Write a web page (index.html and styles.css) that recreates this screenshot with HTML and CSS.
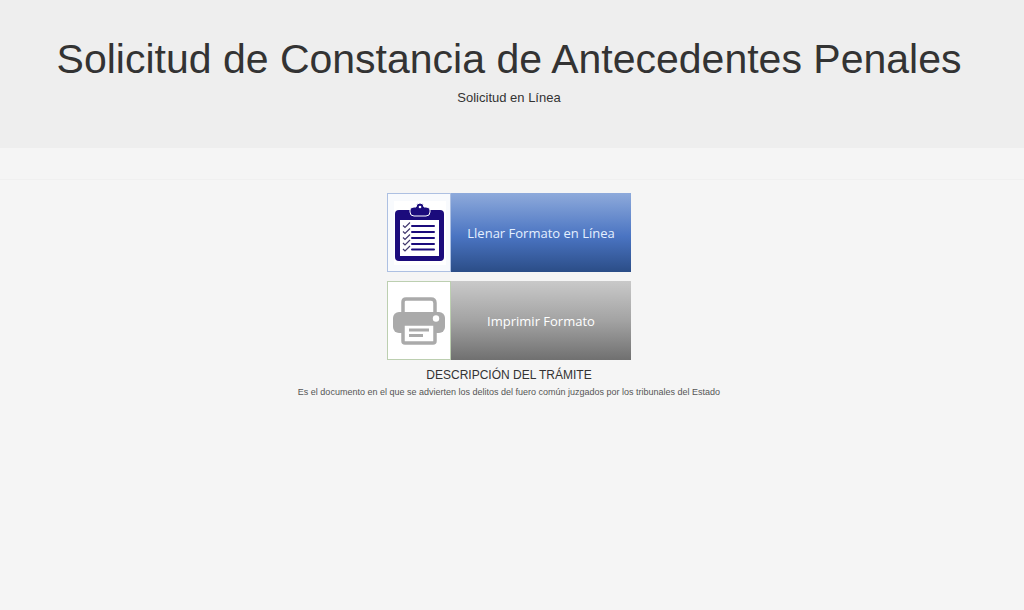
FILE: index.html
```html
<!DOCTYPE html>
<html lang="es">
<head>
<meta charset="utf-8">
<meta name="viewport" content="width=device-width, initial-scale=1">
<title>Solicitud de Constancia de Antecedentes Penales</title>
<link rel="stylesheet" href="styles.css">
</head>
<body>
<header class="hero">
  <h1 class="hero-title">Solicitud de Constancia de Antecedentes Penales</h1>
  <p class="hero-subtitle">Solicitud en Línea</p>
</header>
<hr class="divider">
<main class="content">
  <nav class="actions" aria-label="Opciones del trámite">
    <a class="action action-fill" href="#llenar">
      <span class="action-icon">
        <svg width="62" height="77" viewBox="-1 -1 62 77" aria-hidden="true">
          <rect x="5" y="6" width="52" height="64" fill="#fff"/>
          <rect x="6" y="15" width="49" height="51" rx="4" fill="#1b0b7c"/>
          <rect x="11" y="25" width="39" height="36" fill="#fff"/>
          <path d="M21 15q0-3 4-3h2a4 4 0 0 1 8 0H37q4 0 4 3v2q0 4-4 4H25q-4 0-4-4z" fill="#1b0b7c" stroke="#fff" stroke-width="1"/>
          <circle cx="31" cy="12" r="1.300" fill="#fff"/>
          <path d="M23 31h22M23 37h22M23 43h22M23 49h22M23 54.500h22" stroke="#1b0b7c" stroke-width="2" stroke-linecap="round"/>
          <path d="m14 30.500 2 2 5-5M14 36.500l2 2 5-5M14 42.500l2 2 5-5M14 48l2 2 5-5M14 54l2 2 5-5" fill="none" stroke="#41386e" stroke-width="1.200"/>
        </svg>
      </span>
      <span class="action-label">Llenar Formato en Línea</span>
    </a>
    <a class="action action-print" href="#imprimir">
      <span class="action-icon">
        <svg width="62" height="77" viewBox="-1 0 62 77" aria-hidden="true">
          <rect x="4" y="30" width="52" height="21" rx="6" fill="#aaa"/>
          <path d="M14 32V20q0-3 3-3h25q4 0 4 4v11" fill="#fff" stroke="#aaa" stroke-width="3.500"/>
          <rect x="12" y="30" width="36" height="12" fill="#aaa"/>
          <path d="M14 42h32v17q0 2-2 2H16q-2 0-2-2z" fill="#fff" stroke="#aaa" stroke-width="3.500"/>
          <circle cx="47" cy="36.500" r="3.200" fill="#fff"/>
          <path d="M20 48h20M20 53.500h14" stroke="#aaa" stroke-width="3"/>
        </svg>
      </span>
      <span class="action-label">Imprimir Formato</span>
    </a>
  </nav>
  <h2 class="section-title">DESCRIPCIÓN DEL TRÁMITE</h2>
  <p class="section-text">Es el documento en el que se advierten los delitos del fuero común juzgados por los tribunales del Estado</p>
</main>
</body>
</html>
```
FILE: styles.css
```css
* {
  box-sizing: border-box;
}

body {
  margin: 0;
  background: #f5f5f5;
  color: #333;
  font-family: "Liberation Sans", Arial, sans-serif;
  text-align: center;
}

.hero {
  padding: 36px 6px 42px 0;
  background: #eee;
}

.hero-title {
  margin: 0 0 6px;
  font-size: 41px;
  font-weight: 400;
  line-height: 47px;
}

.hero-subtitle {
  margin: 0;
  font-size: 13px;
  line-height: 17px;
}

.divider {
  margin: 31px 0 13px;
  border: 0;
  border-top: 1px solid #f0f0f0;
}

.content {
  padding-right: 6px;
}

.actions {
  display: flex;
  flex-direction: column;
  align-items: center;
  gap: 9px;
}

.action {
  display: flex;
  width: 244px;
  min-height: 79px;
  color: #fff;
  font-family: "Open Sans", sans-serif;
  font-size: 13px;
  text-decoration: none;
}

.action-icon {
  display: flex;
  flex: none;
  width: 64px;
  background: #fff;
  border: 1px solid;
  align-items: center;
  justify-content: center;
}

.action-label {
  display: flex;
  flex: 1;
  align-items: center;
  justify-content: center;
}

.action-fill .action-icon {
  background: #f8fafd;
  border-color: #adc0e2;
}

.action-fill .action-label {
  background: linear-gradient(#8eaadb, #4a74c2 55%, #2b4d87);
  color: #e4f0ff;
}

.action-print .action-icon {
  border-color: #bccfb0;
}

.action-print .action-label {
  background: linear-gradient(#c9c9c9, #a3a3a3 50%, #707070);
}

.section-title {
  margin: 7px 0 3px;
  font-size: 12px;
  font-weight: 400;
  line-height: 16px;
}

.section-text {
  margin: 0;
  color: #555;
  font-size: 9px;
  line-height: 12px;
}
```
